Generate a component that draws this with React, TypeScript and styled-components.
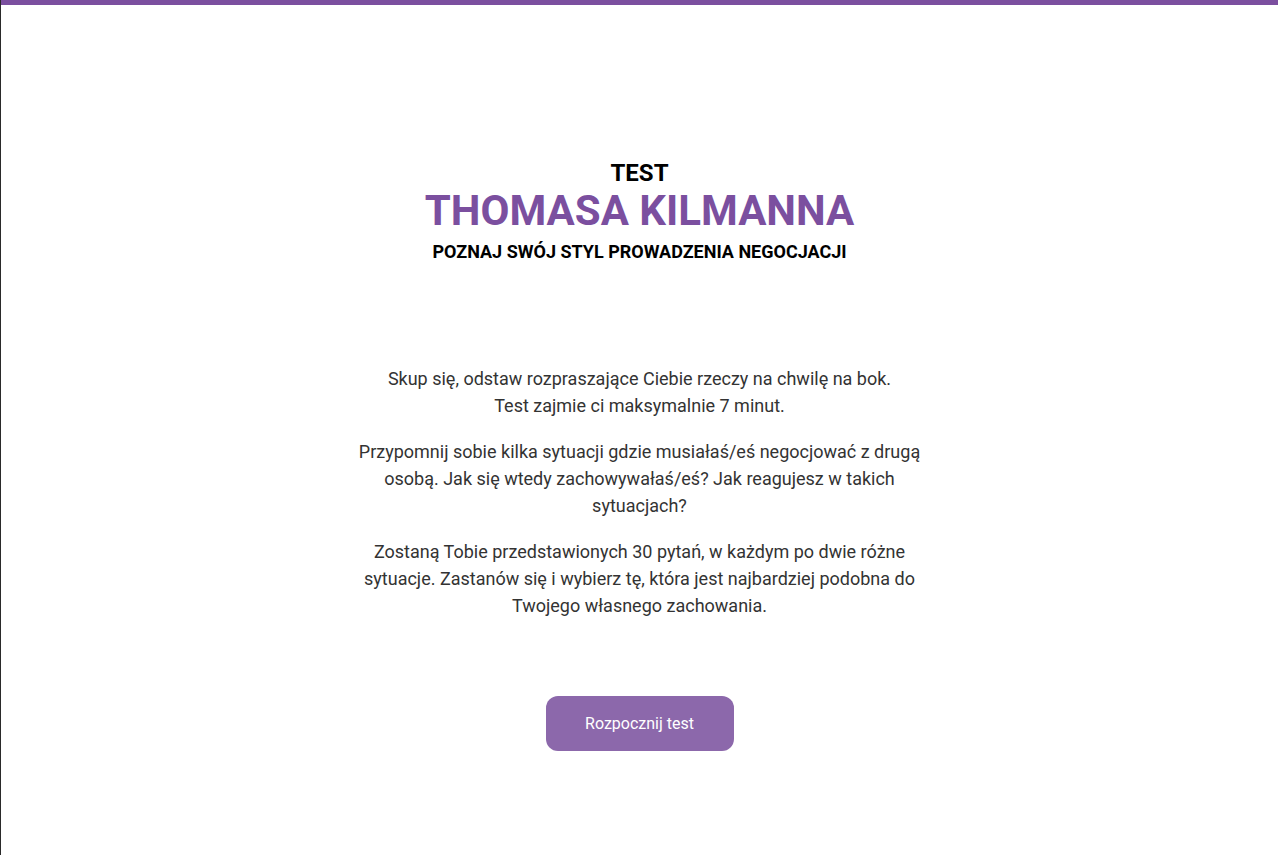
import React from "react";
import styled, { createGlobalStyle } from "styled-components";

const Global = createGlobalStyle`
  html, body { margin: 0; padding: 0; background: #fff; }
  body { font-family: Roboto, "Liberation Sans", Arial, sans-serif; }
`;

const Page = styled.div`
  min-height: 100vh;
  box-sizing: border-box;
  border-left: 1px solid #2a2a2a;
  display: flex;
  flex-direction: column;
`;

const TopBar = styled.div`
  height: 5px;
  background: #7b4f9f;
`;

const Main = styled.main`
  display: flex;
  flex-direction: column;
  align-items: center;
  padding-top: 155px;
`;

const Header = styled.header`
  display: flex;
  flex-direction: column;
  align-items: center;
  text-align: center;
`;

const Kicker = styled.div`
  font-size: 24px;
  font-weight: 700;
  line-height: 27px;
  color: #000;
`;

const Title = styled.h1`
  margin: 0;
  font-size: 42px;
  font-weight: 700;
  line-height: 48px;
  color: #7b4f9f;
`;

const Subtitle = styled.h2`
  margin: 6px 0 0;
  font-size: 18px;
  font-weight: 700;
  line-height: 22px;
  color: #000;
`;

const Body = styled.section`
  width: 580px;
  margin-top: 102px;
  text-align: center;
  color: #333;
  font-size: 18px;
  line-height: 27px;
`;

const Para = styled.p`
  margin: 0 0 19px;
`;

const StartButton = styled.button`
  margin-top: 58px;
  width: 188px;
  height: 55px;
  border: none;
  border-radius: 12px;
  background: #8c68ab;
  color: #fff;
  font-family: inherit;
  font-size: 16px;
  cursor: pointer;
`;

export default function App() {
  return (
    <>
      <Global />
      <Page>
        <TopBar />
        <Main>
          <Header>
            <Kicker>TEST</Kicker>
            <Title>THOMASA KILMANNA</Title>
            <Subtitle>POZNAJ SWÓJ STYL PROWADZENIA NEGOCJACJI</Subtitle>
          </Header>
          <Body>
            <Para>
              Skup się, odstaw rozpraszające Ciebie rzeczy na chwilę na bok.
              <br />
              Test zajmie ci maksymalnie 7 minut.
            </Para>
            <Para>
              Przypomnij sobie kilka sytuacji gdzie musiałaś/eś negocjować z drugą osobą. Jak się wtedy
              zachowywałaś/eś? Jak reagujesz w takich sytuacjach?
            </Para>
            <Para>
              Zostaną Tobie przedstawionych 30 pytań, w każdym po dwie różne sytuacje. Zastanów się i
              wybierz tę, która jest najbardziej podobna do Twojego własnego zachowania.
            </Para>
          </Body>
          <StartButton>Rozpocznij test</StartButton>
        </Main>
      </Page>
    </>
  );
}
